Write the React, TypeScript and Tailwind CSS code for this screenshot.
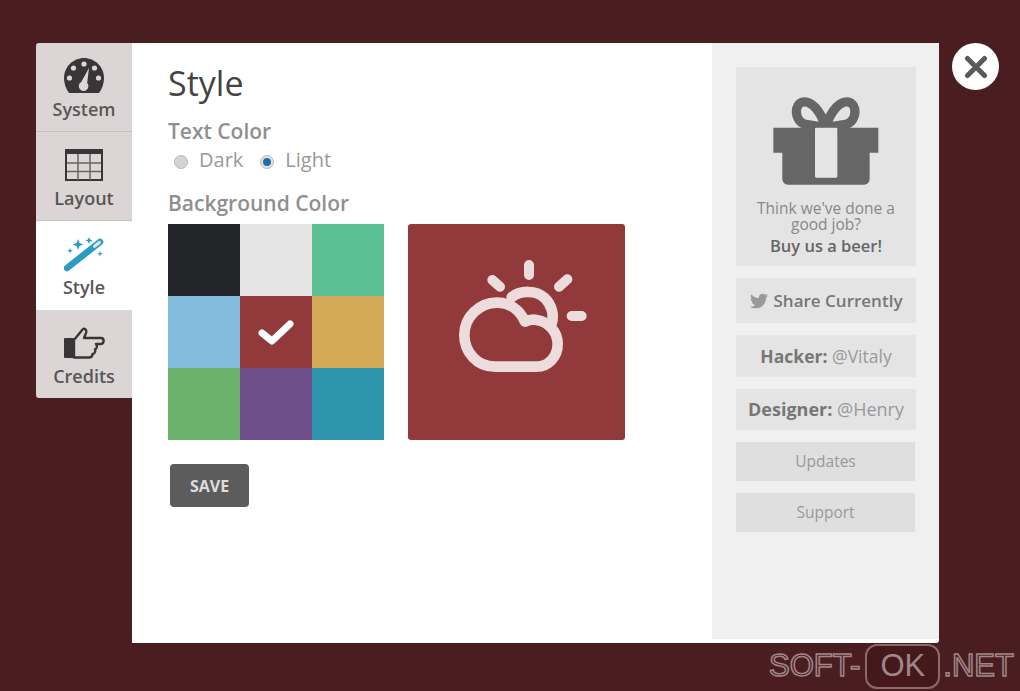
import React from "react";
import { FaTwitter } from "react-icons/fa";

const font = "font-['Open_Sans','Noto_Sans',sans-serif]";

function Gauge() {
  return (
    <svg width="40" height="35" viewBox="0 0 40 35">
      <path d="M20 0C9 0 0 9 0 20c0 6 2 11 5 15h30c3-4 5-9 5-15C40 9 31 0 20 0z" fill="#3a3536" />
      <circle cx="20" cy="6" r="2.6" fill="#ddd6d6" />
      <circle cx="9.5" cy="10" r="2.6" fill="#ddd6d6" />
      <circle cx="30.5" cy="10" r="2.6" fill="#ddd6d6" />
      <circle cx="5.5" cy="20" r="2.6" fill="#ddd6d6" />
      <circle cx="34.5" cy="20" r="2.6" fill="#ddd6d6" />
      <path d="M25 10L23.200 25a4.800 4.800 0 1 1-6-1z" fill="#ddd6d6" />
    </svg>
  );
}

function GridIcon() {
  return (
    <svg width="38" height="32" viewBox="0 0 38 32" fill="none">
      <rect x="1" y="1" width="36" height="30" fill="#ddd6d6" stroke="#3a3536" strokeWidth="2" />
      <rect x="1" y="1" width="36" height="4" fill="#3a3536" />
      <path d="M13 5v26M25 5v26M2 14h34M2 22.500h34" stroke="#6a6465" strokeWidth="1.500" />
    </svg>
  );
}

function Wand() {
  return (
    <svg width="40" height="36" viewBox="0 0 40 36" fill="none">
      <path d="M3 32L36 6" stroke="#2b9cc4" strokeWidth="6.500" strokeLinecap="round" />
      <path d="M30.500 10.300L35.500 6.400" stroke="#d9eef5" strokeWidth="3" strokeLinecap="round" />
      <path d="M14 3l1.500 4 4 1.500-4 1.500L14 14l-1.500-4-4-1.500 4-1.500z" fill="#2b9cc4" />
      <path d="M25 1l1 2.500L28.500 4.500 26 5.500 25 8l-1-2.500L21.500 4.500 24 3.500z" fill="#2b9cc4" />
      <path d="M6 12l.8 2 2 .8-2 .8-.8 2-.8-2-2-.8 2-.8z" fill="#2b9cc4" />
      <path d="M36 15l.8 2 2 .8-2 .8-.8 2-.8-2-2-.8 2-.8z" fill="#2b9cc4" />
    </svg>
  );
}

function Hand() {
  return (
    <svg width="42" height="32" viewBox="0 0 42 32" fill="none">
      <rect x="1" y="11" width="10" height="20" rx="1" fill="#3a3536" />
      <path d="M11 13L20 2c2-1 4 1 3 4l-2 5h17c3.500 0 3.500 5.500 0 6h-5c1.500 1.500 1 5-1 5.500 .8 2-.5 4.500-2.500 4.500 0 2-1.500 3.500-3.500 3.500H11z" stroke="#3a3536" strokeWidth="2.400" strokeLinejoin="round" />
    </svg>
  );
}

function Gift() {
  return (
    <svg width="106" height="92" viewBox="143 97 316 276" fill="none">
      <path d="M300 192C282 140 255 114 232 118 205 124 205 172 236 184L300 195 364 184C395 172 395 124 368 118 345 114 318 140 300 192z" stroke="#666" strokeWidth="28" strokeLinejoin="round" />
      <path d="M143 195H458V270H432V350a16 16 0 0 1-16 16H186a16 16 0 0 1-16-16V270H143z" fill="#666" />
      <rect x="268" y="195" width="67" height="150" rx="4" fill="#e4e4e4" />
    </svg>
  );
}

function Cloud() {
  return (
    <svg width="217" height="217" viewBox="9 12 651 651" fill="none" stroke="#ecdcdc" strokeWidth="32" strokeLinecap="round" strokeLinejoin="round">
      <path d="M270 440C215 440 178 395 178 345 178 290 225 248 275 248 315 248 345 270 360 305 375 298 385 298 395 300 430 305 458 335 458 372 458 410 430 440 395 440Z" />
      <path d="M320 232C345 210 395 210 420 235 440 255 448 285 440 310" />
      <path d="M372 135V165M262 180L285 200M487 178L462 200M500 288H530" strokeWidth="30" />
    </svg>
  );
}

const tabs = [
  { label: "System", icon: <Gauge /> },
  { label: "Layout", icon: <GridIcon /> },
  { label: "Style", icon: <Wand /> },
  { label: "Credits", icon: <Hand /> },
];

const swatches = ["#232427", "#e4e4e4", "#5cc095", "#83bcdc", "#923a3b", "#d3aa58", "#6cb26c", "#6f4f8b", "#2e93ac"];

function Chip({ children, h }: { children: React.ReactNode; h: string }) {
  return <div className={`w-[180px] ${h} bg-[#e4e4e4] flex items-center justify-center gap-[6px]`}>{children}</div>;
}

export default function App() {
  return (
    <div className={`relative w-[1020px] h-[691px] overflow-hidden bg-[#4a1e20] ${font}`}>
      <div className="flex pl-9 pt-[43px]">
        <nav className="w-24 h-[355px] flex flex-col rounded-l-[3px] overflow-hidden">
          {tabs.map((t) => (
            <div
              key={t.label}
              className={`h-[89px] shrink-0 flex flex-col items-center justify-start pt-[14px] border-b border-[#c8c0c0] last:border-b-0 ${
                t.label === "Style" ? "bg-white border-white" : "bg-[#dcd5d5]"
              }`}
            >
              <div className="h-[37px] flex items-center justify-center">{t.icon}</div>
              <div className="mt-[4px] text-[18px] leading-[22px] font-semibold text-[#5a5556]">{t.label}</div>
            </div>
          ))}
        </nav>
        <main className="w-[807px] h-[600px] bg-white flex rounded-r-[3px]">
          <section className="w-[580px] pl-9 pt-[17px]">
            <h1 className="text-[34px] leading-[46px] text-[#444]">Style</h1>
            <div className="mt-[13px] text-[21px] leading-[24px] font-semibold text-[#8f8f8f]">Text Color</div>
            <div className="mt-[4px] flex items-center text-[20px] leading-[26px] text-[#999] pl-[6px]">
              <span className="w-[14px] h-[14px] mt-[3px] rounded-full bg-[#d4d4d4] border border-[#bbb]" />
              <span className="ml-[11px]">Dark</span>
              <span className="ml-[17px] mt-[3px] w-[14px] h-[14px] rounded-full bg-[#e2e2e2] border border-[#bbb] flex items-center justify-center">
                <span className="w-[8px] h-[8px] rounded-full bg-[#1f6fa8]" />
              </span>
              <span className="ml-[11px]">Light</span>
            </div>
            <div className="mt-[18px] text-[21px] leading-[24px] font-semibold text-[#8f8f8f]">Background Color</div>
            <div className="mt-[9px] flex gap-6">
              <div className="grid grid-cols-3 grid-rows-3 w-[216px] h-[216px]">
                {swatches.map((c, i) => (
                  <div key={c} className="relative flex items-center justify-center min-h-0" style={{ backgroundColor: c }}>
                    {i === 4 && (
                      <svg width="38" height="28" viewBox="0 0 38 28" fill="none">
                        <path d="M5 15L15 23 33 6" stroke="#fff" strokeWidth="7" strokeLinecap="round" strokeLinejoin="round" />
                      </svg>
                    )}
                  </div>
                ))}
              </div>
              <div className="w-[217px] h-[216px] rounded-[3px] bg-[#923a3b] overflow-hidden">
                <Cloud />
              </div>
            </div>
            <button className="mt-6 ml-[2px] w-[79px] h-[43px] rounded-[4px] bg-[#5c5c5c] text-[16px] font-bold text-[#ddd]">SAVE</button>
          </section>
          <aside className="w-[227px] h-[596px] bg-[#f0f0f0] pl-6 pt-6 flex flex-col gap-3">
            <div className="w-[180px] h-[199px] bg-[#e4e4e4] flex flex-col items-center pt-[28px]">
              <Gift />
              <div className="mt-[13px] w-[160px] text-center text-[15.500px] leading-[16px] text-[#888]">Think we've done a good job?</div>
              <div className="mt-[3px] text-[16.500px] leading-[22px] font-semibold text-[#666]">Buy us a beer!</div>
            </div>
            <Chip h="h-[45px]">
              <FaTwitter className="text-[#999] text-[18px]" />
              <span className="font-semibold text-[#777] text-[17px]">Share Currently</span>
            </Chip>
            <Chip h="h-[42px]">
              <span className="text-[#777] text-[17.500px]"><b className="font-bold">Hacker:</b> <span className="text-[#999] font-normal">@Vitaly</span></span>
            </Chip>
            <Chip h="h-[41px]">
              <span className="text-[#777] text-[18px]"><b className="font-bold">Designer:</b> <span className="text-[#999] font-normal">@Henry</span></span>
            </Chip>
            <div className="w-[179px] h-[39px] bg-[#dfdfdf] flex items-center justify-center text-[15.500px] text-[#999]">Updates</div>
            <div className="w-[179px] h-[39px] bg-[#dfdfdf] flex items-center justify-center text-[15.500px] text-[#999]">Support</div>
          </aside>
        </main>
      </div>

      <div className="absolute left-[952px] top-[43px] w-[47px] h-[47px] rounded-full bg-white flex items-center justify-center">
        <svg width="24" height="24" viewBox="0 0 24 24" fill="none">
          <path d="M3.500 3.500L20.500 20.500M20.500 3.500L3.500 20.500" stroke="#5a5a5a" strokeWidth="5" strokeLinecap="round" />
        </svg>
      </div>

      <div className="absolute left-[769px] top-[643px] h-[46px] flex items-center font-['Liberation_Sans',sans-serif] text-[31px] text-transparent [-webkit-text-stroke:1.500px_#a08688]">
        <span>SOFT-</span>
        <span className="ml-[5px] w-[75px] h-[45px] rounded-[12px] border-2 border-[#8a6a6c] flex items-center justify-center bg-[#45191b] [-webkit-text-stroke:0] text-[#a08688]">OK</span>
        <span className="ml-[3px]">.NET</span>
      </div>
    </div>
  );
}
